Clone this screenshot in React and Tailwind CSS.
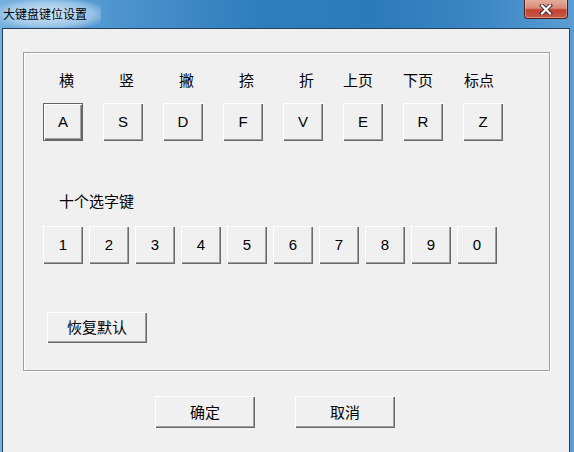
import { Fragment } from 'react'

const KEYS = [
  { label: '横', key: 'A', pad: 'pl-[16px]' },
  { label: '竖', key: 'S', pad: 'pl-[16px]' },
  { label: '撇', key: 'D', pad: 'pl-[16px]' },
  { label: '捺', key: 'F', pad: 'pl-[16px]' },
  { label: '折', key: 'V', pad: 'pl-[16px]' },
  { label: '上页', key: 'E', pad: 'pl-0' },
  { label: '下页', key: 'R', pad: 'pl-0' },
  { label: '标点', key: 'Z', pad: 'pl-[1px]' },
]

const DIGITS = ['1', '2', '3', '4', '5', '6', '7', '8', '9', '0']

const CJK = "font-['Noto_Sans_CJK_SC','Noto_Sans',sans-serif]"
const LATIN = "font-['Liberation_Sans','Noto_Sans_CJK_SC',sans-serif]"

// classic 3D push button edges
const BEVEL =
  'bg-[#f0f0f0] shadow-[inset_1px_1px_0_#ffffff,inset_-1px_-1px_0_#696969,inset_-2px_-2px_0_#a0a0a0]'

function WinButton({ children, className = '', isDefault = false, font = LATIN }) {
  return (
    <button
      className={`flex items-center justify-center text-black ${font} ${BEVEL} ${
        isDefault ? 'border border-[#646464]' : ''
      } ${className}`}
    >
      {children}
    </button>
  )
}

function CloseButton() {
  return (
    <div className="w-[44px] h-[19px] mr-[6px] rounded-b-[4px] border border-t-0 border-[#4a1f1a] bg-[linear-gradient(180deg,#e7ab9c_0%,#d98a78_45%,#c2412f_55%,#c85a45_100%)] shadow-[inset_0_-1px_0_rgba(255,255,255,0.35),inset_1px_0_0_rgba(255,255,255,0.3),inset_-1px_0_0_rgba(255,255,255,0.3)] flex items-center justify-center">
      <svg width="14" height="11" viewBox="0 0 14 11">
        <path d="M3 1.5 L11 9.5 M11 1.5 L3 9.5" stroke="#3b2a2a" strokeWidth="4" strokeLinecap="square" />
        <path d="M3 1.5 L11 9.5 M11 1.5 L3 9.5" stroke="#ffffff" strokeWidth="2.2" strokeLinecap="square" />
      </svg>
    </div>
  )
}

export default function App() {
  return (
    <div className="w-[574px] h-[452px] overflow-hidden flex flex-col bg-[linear-gradient(90deg,#78b0de_0%,#4e95cf_20%,#2e7dbd_45%,#2b7aba_65%,#3d88c6_85%,#5c9dd3_100%)]">
      {/* Title bar */}
      <div className="h-[28px] shrink-0 flex items-start">
        <div className="h-[28px] flex items-center pl-[3px] pr-[14px] bg-[radial-gradient(ellipse_at_center,rgba(230,242,252,0.85)_0%,rgba(200,225,245,0.55)_60%,rgba(160,200,235,0)_85%)]">
          <span className={`text-[12px] leading-none text-black ${CJK}`}>大键盘键位设置</span>
        </div>
        <div className="ml-auto">
          <CloseButton />
        </div>
      </div>

      {/* Client area */}
      <div className="flex-1 ml-[2px] mr-[4px] border border-b-0 border-[#233f5c] bg-[#f0f0f0]">
        {/* Group box */}
        <div className="ml-[20px] mt-[23px] w-[527px] h-[319px] border border-[#a0a0a0] shadow-[inset_1px_1px_0_#ffffff,1px_1px_0_#ffffff] pl-[19px] pt-[17px]">
          <div className="grid grid-cols-[repeat(8,40px)] gap-x-[20px]">
            {KEYS.map((k) => (
              <div key={k.key} className={`h-[20px] leading-[20px] text-[15px] text-black whitespace-nowrap ${CJK} ${k.pad}`}>
                {k.label}
              </div>
            ))}
            {KEYS.map((k, i) => (
              <WinButton key={k.key + 'b'} isDefault={i === 0} className="mt-[13px] w-[40px] h-[38px] text-[15px]">
                {k.key}
              </WinButton>
            ))}
          </div>

          <div className={`mt-[50px] pl-[16px] h-[20px] leading-[20px] text-[15px] text-black ${CJK}`}>十个选字键</div>

          <div className="mt-[15px] flex gap-[6px]">
            {DIGITS.map((d) => (
              <Fragment key={d}>
                <WinButton className="w-[40px] h-[38px] text-[15px]">{d}</WinButton>
              </Fragment>
            ))}
          </div>

          <WinButton font={CJK} className="mt-[48px] ml-[4px] w-[100px] h-[31px] text-[15px]">
            恢复默认
          </WinButton>
        </div>

        {/* Dialog buttons */}
        <div className="mt-[25px] pl-[152px] flex gap-[40px]">
          <WinButton font={CJK} className="w-[100px] h-[32px] text-[15px]">确定</WinButton>
          <WinButton font={CJK} className="w-[100px] h-[32px] text-[15px]">取消</WinButton>
        </div>
      </div>
    </div>
  )
}
